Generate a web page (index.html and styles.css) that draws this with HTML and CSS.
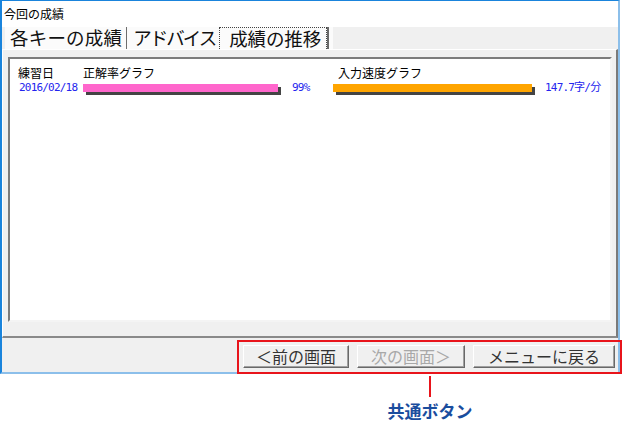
FILE: index.html
```html
<!DOCTYPE html>
<html lang="ja">
<head>
<meta charset="UTF-8">
<meta name="viewport" content="width=device-width, initial-scale=1.0">
<title>今回の成績</title>
<link rel="stylesheet" href="styles.css">
</head>
<body>

<div class="window">
    <div class="titlebar">今回の成績</div>
    <div class="client">
        <div class="tabs">
            <div class="tab tab-keys">各キーの成績</div>
            <div class="tab tab-advice">アドバイス</div>
            <div class="tab tab-history">成績の推移</div>
        </div>
        <div class="page">
            <div class="panel">
                <div class="history">
                    <div class="head">練習日</div>
                    <div class="head">正解率グラフ</div>
                    <div class="head head-speed">入力速度グラフ</div>

                    <div class="date">2016/02/18</div>
                    <div class="cell">
                        <div class="bar bar-accuracy" style="width: 195px"></div>
                        <span class="value value-accuracy">99%</span>
                    </div>
                    <div class="cell">
                        <div class="bar bar-speed" style="width: 199px"></div>
                        <span class="value">147.7字/分</span>
                    </div>
                </div>
            </div>
        </div>
        <div class="buttons">
            <button class="btn btn-prev">＜前の画面</button>
            <button class="btn btn-next" disabled>次の画面＞</button>
            <button class="btn btn-menu">メニューに戻る</button>
        </div>
    </div>
    <div class="highlight"></div>
</div>

<div class="note">
    <div class="note-line"></div>
    <div class="note-label">共通ボタン</div>
</div>

</body>
</html>
```

FILE: styles.css
```css
body {
    margin: 0;
    background-color: #fff;
    font-family: "Noto Sans CJK JP", "Noto Sans", sans-serif;
    color: #000;
}
.window {
    position: relative;
    width: 616px;
    border-top: 1px solid #1a84dc;
    border-left: 2px solid #1a84dc;
    border-right: 2px solid #8cbfea;
    border-bottom: 2px solid #8cbfea;
    background-color: #f0f0f0;
}
.titlebar {
    height: 26px;
    line-height: 25px;
    padding-left: 2px;
    font-size: 12px;
    background-color: #fff;
}
.tabs {
    display: flex;
    width: 328px;
    height: 22px;
    margin-left: 3px;
    background-color: #fbfbfb;
    font-size: 18.5px;
    line-height: 21px;
    color: #111;
}
.tab {
    white-space: nowrap;
}
.tab-keys {
    padding: 0 4px 0 5px;
    letter-spacing: 0.2px;
    border-right: 1px solid #6d6d6d;
}
.tab-advice {
    padding: 0 4px 0 6px;
    letter-spacing: -2px;
}
.tab-history {
    padding: 0 5px 0 9px;
    border: 1px dotted #444;
    border-bottom-width: 0;
    box-shadow: 2px 0 0 #696969;
    letter-spacing: -0.1px;
}
.page {
    border-top: 1px solid #fff;
    border-left: 1px solid #fff;
    border-right: 2px solid #7a7a7a;
    border-bottom: 2px solid #8a8a8a;
    padding: 7px 4px 14px 5px;
}
.panel {
    height: 254px;
    background-color: #fff;
    border-top: 2px solid #7c7c7c;
    border-left: 2px solid #7c7c7c;
    border-right: 2px solid #f4f4f4;
    border-bottom: 2px solid #f4f4f4;
    padding: 7px 8px 0;
}
.history {
    display: grid;
    grid-template-columns: 65px 250px auto;
    row-gap: 2px;
}
.head {
    font-size: 12px;
    line-height: 14px;
    white-space: nowrap;
}
.head-speed {
    padding-left: 5px;
}
.date,
.value {
    font-family: "DejaVu Sans Mono", "Noto Sans CJK JP", monospace;
    font-size: 11px;
    line-height: 12px;
    letter-spacing: -0.8px;
    color: #2424ee;
    white-space: nowrap;
}
.date {
    padding-left: 1px;
}
.cell {
    display: flex;
    align-items: center;
    height: 12px;
}
.bar {
    height: 8px;
    box-shadow: 3px 3px 0 #444;
}
.bar-accuracy {
    background-color: #ff66cc;
}
.bar-speed {
    background-color: #ffa500;
}
.value {
    margin-left: 13px;
}
.value-accuracy {
    margin-left: 14px;
}
.buttons {
    display: flex;
    justify-content: flex-end;
    gap: 8px;
    height: 34px;
    padding: 7px 3px 0 0;
    box-sizing: border-box;
}
.btn {
    height: 23px;
    padding: 0 0 2px;
    font-family: "Noto Sans CJK JP", sans-serif;
    font-size: 16px;
    line-height: 18px;
    color: #333;
    background-color: #f0f0f0;
    border-top: 1px solid #fff;
    border-left: 1px solid #fff;
    border-right: 1px solid #696969;
    border-bottom: 1px solid #696969;
    box-shadow: inset -1px -1px 0 #a0a0a0;
}
.btn-prev {
    width: 106px;
}
.btn-next {
    width: 108px;
    color: #a8a8a8;
}
.btn-menu {
    width: 142px;
}
.highlight {
    position: absolute;
    left: 235px;
    top: 339px;
    width: 381px;
    height: 30px;
    border: 2px solid #e8141b;
}
.note {
    display: flex;
    flex-direction: column;
    align-items: center;
    width: 100px;
    margin: 2px 0 0 380px;
}
.note-line {
    width: 2px;
    height: 21px;
    background-color: #e8141b;
}
.note-label {
    margin-top: 4px;
    font-size: 17px;
    font-weight: bold;
    line-height: 20px;
    color: #1a4d9e;
    white-space: nowrap;
}
```
